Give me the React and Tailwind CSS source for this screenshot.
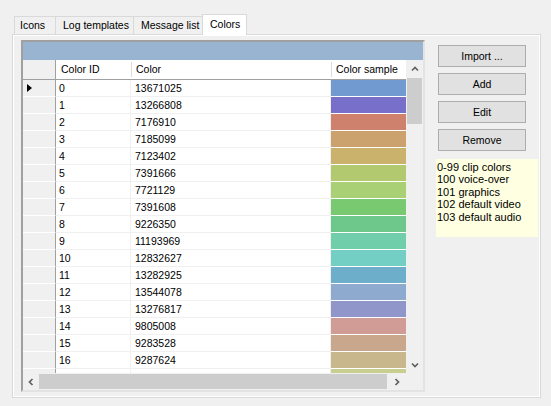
import React from 'react';

// Color values are stored as Windows COLORREF (0x00BBGGRR)
const rows = [
  [0, 13671025],
  [1, 13266808],
  [2, 7176910],
  [3, 7185099],
  [4, 7123402],
  [5, 7391666],
  [6, 7721129],
  [7, 7391608],
  [8, 9226350],
  [9, 11193969],
  [10, 12832627],
  [11, 13282925],
  [12, 13544078],
  [13, 13276817],
  [14, 9805008],
  [15, 9283528],
  [16, 9287624],
  [17, 9490120],
];

const toRgb = (v) => `rgb(${v & 255}, ${(v >> 8) & 255}, ${(v >> 16) & 255})`;

const chevronPaths = {
  up: 'M1 5.5 L4 2.5 L7 5.5',
  down: 'M1 2.5 L4 5.5 L7 2.5',
  left: 'M5.5 1 L2.5 4 L5.5 7',
  right: 'M2.5 1 L5.5 4 L2.5 7',
};

const Chevron = ({ dir }) => (
  <svg width="8" height="8" viewBox="0 0 8 8">
    <path d={chevronPaths[dir]} fill="none" stroke="#606060" strokeWidth="1.7" />
  </svg>
);

const tabs = [
  { label: 'Icons', className: 'w-[41px] pl-[5px]' },
  { label: 'Log templates', className: 'w-[78px] pl-[7px]' },
  { label: 'Message list', className: 'w-[69px] pl-[7px]' },
];

const HeaderCell = ({ width, children, divider }) => (
  <div className={`${width} flex items-center`}>
    {divider && <span className="h-[15px] w-px bg-[#dcdcdc]" />}
    <span className={divider ? 'pl-[4px]' : 'pl-[5px]'}>{children}</span>
  </div>
);

const WinButton = ({ children }) => (
  <button className="ml-[2px] mb-[6px] w-[88px] h-[22px] bg-[#e1e1e1] border border-[#adadad] text-center leading-[20px]">
    {children}
  </button>
);

const App = () => {
  return (
    <div className="w-[551px] h-[406px] bg-[#f0f0f0] pt-[14px] pl-[12px] font-['Liberation_Sans',Arial,sans-serif] text-[10.5px] text-black">
      {/* tab strip */}
      <div className="flex items-end h-[20px] pl-[2px]">
        {tabs.map((t) => (
          <div
            key={t.label}
            className={`${t.className} h-[18px] flex items-center border-t border-l border-[#d9d9d9] bg-[#f0f0f0]`}
          >
            {t.label}
          </div>
        ))}
        <div className="relative z-10 -mb-px w-[45px] h-[21px] pl-[7px] flex items-center bg-white border border-b-0 border-[#d9d9d9]">
          Colors
        </div>
      </div>

      {/* tab page */}
      <div className="w-[529px] h-[364px] border border-[#d9d9d9]">
        <div className="h-full border border-white bg-[#f0f0f0] flex pl-[7px] pt-[4px]">
          {/* grid */}
          <div className="w-[404px] h-[352px] border-2 border-[#a0a0a0] border-r-[#e3e3e3] border-b-[#e3e3e3] flex flex-col">
            <div className="h-[18px] shrink-0 bg-[#99b4d1]" />
            <div className="flex h-[313px] shrink-0">
              <div className="w-[383px] flex flex-col overflow-hidden">
                <div className="flex h-[20px] shrink-0 border-b border-[#a0a0a0] bg-white leading-[19px]">
                  <div className="w-[33px] bg-[#f0f0f0] border-r border-[#a0a0a0]" />
                  <HeaderCell width="w-[75px]">Color ID</HeaderCell>
                  <HeaderCell width="w-[200px]" divider>Color</HeaderCell>
                  <HeaderCell width="w-[75px]" divider>Color sample</HeaderCell>
                </div>
                {rows.map(([id, value]) => (
                  <div key={id} className="flex h-[17px] shrink-0 leading-[17px]">
                    <div className="w-[33px] shrink-0 bg-[#f0f0f0] border-r border-b border-r-[#a0a0a0] border-b-white flex items-center">
                      {id === 0 && (
                        <svg className="ml-[4px]" width="5" height="8" viewBox="0 0 5 8">
                          <path d="M0 0 L5 4 L0 8 Z" fill="#000" />
                        </svg>
                      )}
                    </div>
                    <div className="w-[75px] shrink-0 bg-white border-r border-b border-[#f0f0f0] pl-[3px]">{id}</div>
                    <div className="w-[200px] shrink-0 bg-white border-r border-b border-[#f0f0f0] pl-[4px]">{value}</div>
                    <div className="w-[75px] shrink-0 border-b border-white" style={{ backgroundColor: toRgb(value) }} />
                  </div>
                ))}
              </div>
              {/* vertical scrollbar */}
              <div className="w-[17px] bg-[#f0f0f0] flex flex-col items-center">
                <div className="h-[17px] flex items-center justify-center">
                  <Chevron dir="up" />
                </div>
                <div className="w-[15px] h-[46px] mt-px bg-[#cdcdcd]" />
                <div className="flex-1" />
                <div className="h-[17px] flex items-center justify-center">
                  <Chevron dir="down" />
                </div>
              </div>
            </div>
            {/* horizontal scrollbar */}
            <div className="flex h-[17px] shrink-0 bg-[#f0f0f0]">
              <div className="w-[16px] flex items-center justify-center">
                <Chevron dir="left" />
              </div>
              <div className="w-[348px] h-[15px] self-center bg-[#cdcdcd]" />
              <div className="flex-1 flex items-center justify-center">
                <Chevron dir="right" />
              </div>
              <div className="w-[17px]" />
            </div>
          </div>

          {/* buttons + legend */}
          <div className="ml-[11px] pt-[5px] flex flex-col">
            <WinButton>Import ...</WinButton>
            <WinButton>Add</WinButton>
            <WinButton>Edit</WinButton>
            <WinButton>Remove</WinButton>
            <div className="mt-[2px] w-[102px] h-[78px] bg-[#ffffe1] pl-px pt-[2px] leading-[12.4px] text-[11px]">
              <div>0-99 clip colors</div>
              <div>100 voice-over</div>
              <div>101 graphics</div>
              <div>102 default video</div>
              <div>103 default audio</div>
            </div>
          </div>
        </div>
      </div>
    </div>
  );
};

export default App;
